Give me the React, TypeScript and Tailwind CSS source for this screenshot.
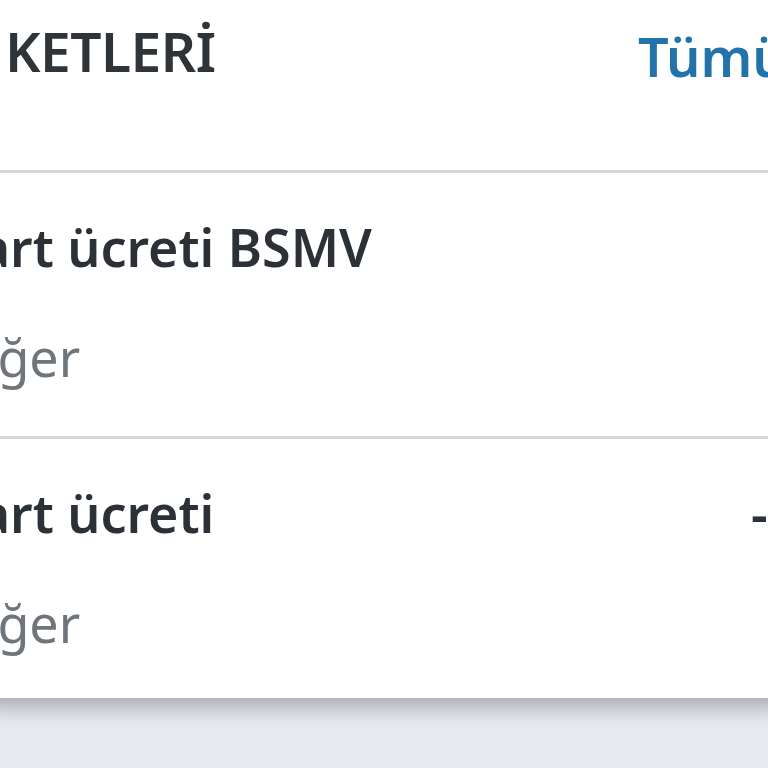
import React from 'react';

const rows = [
  { title: 'Kart ücreti BSMV', category: 'Diğer', amount: '-1,25 TL', left: 'w-[840px]', height: 'h-[263px]' },
  { title: 'Kart ücreti', category: 'Diğer', amount: '-25,00 TL', left: 'w-[805px]', height: 'h-[259px]' },
];

export default function App() {
  return (
    <div
      className="w-[768px] h-[768px] overflow-hidden bg-[#e8eaf1]"
      style={{ fontFamily: '"Noto Sans", "Open Sans", sans-serif' }}
    >
      {/* card is wider than the viewport so its shadow runs edge to edge */}
      <div className="w-[808px] -ml-[20px] pl-[20px] bg-white shadow-[0_8px_22px_rgba(0,0,0,0.3)] h-[698px] overflow-hidden">
        <div className="h-[170px] flex items-start whitespace-nowrap">
          <div className="w-[638px] shrink-0 pt-[23px] pl-[5px]">
            <span className="text-[55px] leading-none font-semibold text-[#2f3439] tracking-[-0.5px]">KETLERİ</span>
          </div>
          <span className="shrink-0 pt-[29px] text-[54px] leading-none font-semibold text-[#2272ab]">
            Tümünü gör
          </span>
        </div>
        <div className="h-[3px] -ml-[20px] bg-[#d6d9da]" />
        {rows.map((row, i) => (
          <div key={i}>
            <div className={`${row.height} flex items-start whitespace-nowrap`}>
              <div className={`${row.left} shrink-0 flex flex-col -ml-[54px]`}>
                <span className="pt-[48px] text-[52px] leading-none font-semibold text-[#2c3137]">
                  {row.title}
                </span>
                <span className="pt-[58px] text-[52px] leading-none text-[#6f757b]">
                  {row.category}
                </span>
              </div>
              <span className="shrink-0 pt-[48px] text-[52px] leading-none font-semibold text-[#2c3137]">
                {row.amount}
              </span>
            </div>
            {i === 0 && <div className="h-[3px] -ml-[20px] bg-[#d6d9da]" />}
          </div>
        ))}
      </div>
    </div>
  );
}
